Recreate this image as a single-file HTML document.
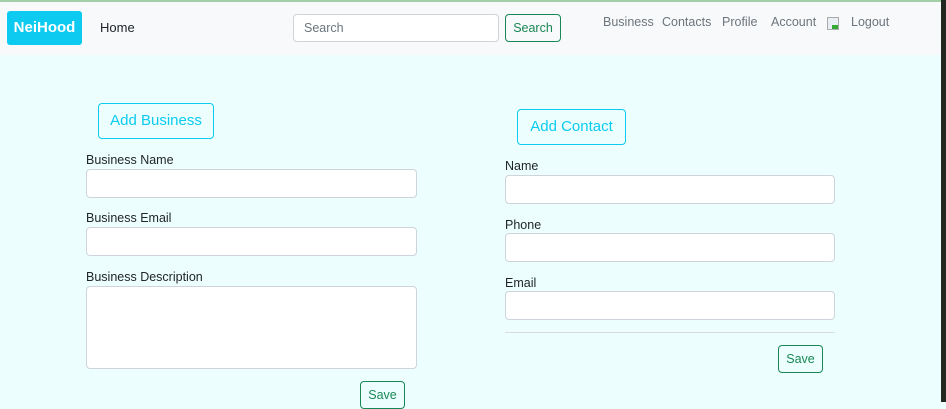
<!DOCTYPE html>
<html><head><meta charset="utf-8"><style>
*{box-sizing:border-box;margin:0;padding:0}
body{width:946px;height:402px;overflow:hidden;background:#ecfffe;font-family:"Liberation Sans",sans-serif;position:relative;color:#212529}
.nav{position:absolute;left:0;top:0;width:941px;height:55px;background:#f8f9fa;border-top:2px solid #a3cfa8}
.dark{position:absolute;left:941px;top:0;width:5px;height:402px;background:#222820}
.a{position:absolute}
.brand{left:7px;top:11px;width:75px;height:34px;background:#0dcaf0;border-radius:3px;color:#fff;font-weight:bold;font-size:15px;line-height:34px;text-align:center}
.link{color:#6c757d;font-size:12.5px}
.input{background:#fff;border:1px solid #ced4da;border-radius:4px}
.lbl{font-size:12.5px;color:#212529}
.btn-info{border:1px solid #0dcaf0;color:#0dcaf0;border-radius:4px;font-size:15px;text-align:center;background:transparent}
.btn-s{border:1px solid #198754;color:#198754;border-radius:4px;font-size:12.5px;text-align:center}
</style></head><body>
<div class="nav"></div>
<div class="dark"></div>
<div class="a brand">NeiHood</div>
<div class="a" style="left:100px;top:20px;font-size:13px;color:#212529">Home</div>
<div class="a input" style="left:293px;top:14px;width:206px;height:28px;font-size:12.5px;color:#6c757d;padding:6px 10px">Search</div>
<div class="a btn-s" style="left:505px;top:14px;width:56px;height:28px;line-height:26px">Search</div>
<div class="a link" style="left:603px;top:15px">Business</div>
<div class="a link" style="left:662px;top:15px">Contacts</div>
<div class="a link" style="left:722px;top:15px">Profile</div>
<div class="a link" style="left:771px;top:15px">Account</div>
<div class="a" style="left:827px;top:17px;width:12px;height:13px;border:1px solid #aaa;background:#e8eef4"><div style="position:absolute;right:0;bottom:0;width:6px;height:4px;background:#3a3"></div></div>
<div class="a link" style="left:851px;top:15px">Logout</div>

<div class="a btn-info" style="left:98px;top:103px;width:116px;height:36px;line-height:34px">Add Business</div>
<div class="a lbl" style="left:86px;top:153px">Business Name</div>
<div class="a input" style="left:86px;top:169px;width:331px;height:29px"></div>
<div class="a lbl" style="left:86px;top:211px">Business Email</div>
<div class="a input" style="left:86px;top:227px;width:331px;height:29px"></div>
<div class="a lbl" style="left:86px;top:270px">Business Description</div>
<div class="a input" style="left:86px;top:286px;width:331px;height:83px"></div>
<div class="a btn-s" style="left:360px;top:381px;width:45px;height:28px;line-height:26px">Save</div>

<div class="a btn-info" style="left:517px;top:109px;width:109px;height:36px;line-height:34px">Add Contact</div>
<div class="a lbl" style="left:505px;top:159px">Name</div>
<div class="a input" style="left:505px;top:175px;width:330px;height:29px"></div>
<div class="a lbl" style="left:505px;top:218px">Phone</div>
<div class="a input" style="left:505px;top:233px;width:330px;height:29px"></div>
<div class="a lbl" style="left:505px;top:276px">Email</div>
<div class="a input" style="left:505px;top:291px;width:330px;height:29px"></div>
<div class="a" style="left:505px;top:332px;width:330px;height:1px;background:#d8dcdf"></div>
<div class="a btn-s" style="left:778px;top:345px;width:45px;height:28px;line-height:26px">Save</div>
</body></html>
